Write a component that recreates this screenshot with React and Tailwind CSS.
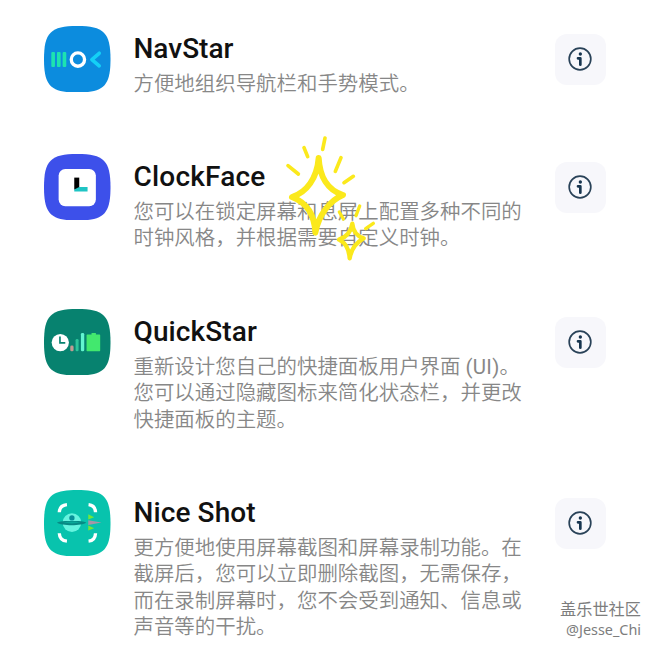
import React from "react";

function Squircle({ fill, children }) {
  return (
    <svg viewBox="28 30 200 200" className="h-[66.5px] w-[66.5px] shrink-0">
      <path
        d="M128 30C208 30 228 50 228 130C228 210 208 230 128 230C48 230 28 210 28 130C28 50 48 30 128 30Z"
        fill={fill}
      />
      {children}
    </svg>
  );
}

function NavStarIcon() {
  return (
    <Squircle fill="#0c8cde">
      <g fill="#1de3b0">
        <rect x="50" y="108" width="11" height="45" rx="3" />
        <rect x="67" y="108" width="11" height="45" rx="3" />
        <rect x="84" y="108" width="11" height="45" rx="3" />
      </g>
      <circle cx="130" cy="131" r="20" fill="none" stroke="#fff" strokeWidth="10" />
      <path d="M194 112L172 131L194 150" fill="none" stroke="#14d0f6" strokeWidth="11" strokeLinecap="round" strokeLinejoin="round" />
    </Squircle>
  );
}

function ClockFaceIcon() {
  return (
    <Squircle fill="#3d50ea">
      <rect x="72" y="75" width="112" height="112" rx="20" fill="#fff" />
      <rect x="119" y="101" width="15" height="36" fill="#000" />
      <path d="M134 129H159V143H119V137Z" fill="#1fc4c4" />
    </Squircle>
  );
}

function QuickStarIcon() {
  return (
    <Squircle fill="#07826f">
      <circle cx="77" cy="131" r="26" fill="#fff" />
      <path d="M76 113V132H92" fill="none" stroke="#07826f" strokeWidth="5" />
      <rect x="107" y="140" width="10" height="17" rx="4" fill="#c39a92" />
      <rect x="123" y="120" width="9" height="37" rx="4" fill="#2cc49a" />
      <rect x="139" y="102" width="10" height="55" rx="4" fill="#62f5d0" />
      <path d="M158 107H171V102H184V107H195Q197 107 197 109V155Q197 157 195 157H158Q156 157 156 155V109Q156 107 158 107Z" fill="#42e86e" />
    </Squircle>
  );
}

function NiceShotIcon() {
  return (
    <Squircle fill="#08c3ad">
      <g fill="none" stroke="#fff" strokeWidth="10">
        <path d="M97 74Q75 76 74 97" />
        <path d="M162 74Q182 76 183 97" />
        <path d="M74 160Q75 182 97 184" />
        <path d="M183 160Q182 182 162 184" />
      </g>
      <circle cx="112" cy="128" r="28" fill="#65f4df" />
      <circle cx="112" cy="114" r="8" fill="#078f98" />
      <path d="M67 128C80 122 96 123 111 123C128 123 144 122 155 128C143 139 80 139 67 128Z" fill="#078a84" />
      <path d="M86 128Q112 122 138 128Q112 133 86 128Z" fill="#0aa899" />
      <path d="M161 103L179 112L161 119Z" fill="#72e83a" />
      <path d="M161 121L201 128L161 135Z" fill="#a795a7" />
      <path d="M161 137L179 145L161 152Z" fill="#72e83a" />
    </Squircle>
  );
}

function InfoButton() {
  return (
    <button className="mt-2 flex h-[51px] w-[51px] shrink-0 items-center justify-center rounded-[12px] bg-[#f7f7fb]">
      <svg viewBox="0 0 72 72" className="h-6 w-6">
        <circle cx="36" cy="36" r="32.5" fill="none" stroke="#294258" strokeWidth="5" />
        <circle cx="37" cy="21" r="5" fill="#17354f" />
        <path d="M30 34H37V53" fill="none" stroke="#17354f" strokeWidth="8" strokeLinecap="round" strokeLinejoin="round" />
      </svg>
    </button>
  );
}

const apps = [
  {
    name: "NavStar",
    icon: NavStarIcon,
    lines: ["方便地组织导航栏和手势模式。"],
    height: "h-[128px]",
    tracking: "tracking-normal",
  },
  {
    name: "ClockFace",
    icon: ClockFaceIcon,
    lines: ["您可以在锁定屏幕和息屏上配置多种不同的", "时钟风格，并根据需要自定义时钟。"],
    height: "h-[155px]",
    tracking: "tracking-[0.2px]",
  },
  {
    name: "QuickStar",
    icon: QuickStarIcon,
    lines: [
      <>
        重新设计您自己的快捷面板用户界面 <span className="font-normal tracking-[0.3px]">(UI)</span>。
      </>,
      "您可以通过隐藏图标来简化状态栏，并更改",
      "快捷面板的主题。",
    ],
    height: "h-[181px]",
    tracking: "tracking-[0.1px]",
  },
  {
    name: "Nice Shot",
    icon: NiceShotIcon,
    lines: [
      "更方便地使用屏幕截图和屏幕录制功能。在",
      "截屏后，您可以立即删除截图，无需保存，",
      "而在录制屏幕时，您不会受到通知、信息或",
      "声音等的干扰。",
    ],
    height: "h-[160px]",
    tracking: "tracking-[0.1px]",
  },
];

function AppRow({ app }) {
  const Icon = app.icon;
  return (
    <li className={`flex items-start ${app.height}`}>
      <Icon />
      <div className="ml-[23px] mt-[6px] w-[421px] shrink-0 whitespace-nowrap">
        <h2 className={`text-[28px] font-medium leading-[34px] text-[#111] ${app.tracking}`}>{app.name}</h2>
        <p className="mt-[5px] text-[20.450px] font-[350] leading-[26.6px] text-[#878787]">
          {app.lines.map((line, i) => (
            <span key={i} className="block">
              {line}
            </span>
          ))}
        </p>
      </div>
      <InfoButton />
    </li>
  );
}

function Sparkles() {
  return (
    <svg
      viewBox="0 0 330 405"
      className="pointer-events-none absolute left-[280px] top-[130px] h-[135px] w-[110px]"
      fill="none"
      stroke="#fbe91c"
      strokeLinecap="round"
      strokeLinejoin="round"
    >
      <path d="M116 84C119 140 143 181 189 195C151 211 116 253 106 308C104 258 82 219 36 201C80 187 111 145 116 84Z" strokeWidth="18" />
      <path d="M24 107L55 132M72 53L83 80M135 24L128 58M183 83L166 124M220 139L192 158" strokeWidth="11" />
      <path d="M217 281C219 302 231 319 251 325C231 336 214 355 209 385C207 356 196 338 177 329C199 322 213 306 217 281Z" strokeWidth="13" />
      <path d="M178 246L190 267M239 228L228 257M280 280L257 296" strokeWidth="10" />
    </svg>
  );
}

export default function App() {
  return (
    <main className="relative h-[650px] w-[650px] overflow-hidden bg-white font-['Roboto','Noto_Sans_CJK_SC',sans-serif]">
      <ul className="pl-11 pt-[25.500px]">
        {apps.map((app) => (
          <AppRow key={app.name} app={app} />
        ))}
      </ul>
      <Sparkles />
      <div className="absolute right-[9px] top-[599px] text-right text-[#7d7d7d]">
        <div className="text-[16.200px] leading-[22px]">盖乐世社区</div>
        <div className="font-['Noto_Sans',sans-serif] text-[14.400px] leading-[18px]">@Jesse_Chi</div>
      </div>
    </main>
  );
}
